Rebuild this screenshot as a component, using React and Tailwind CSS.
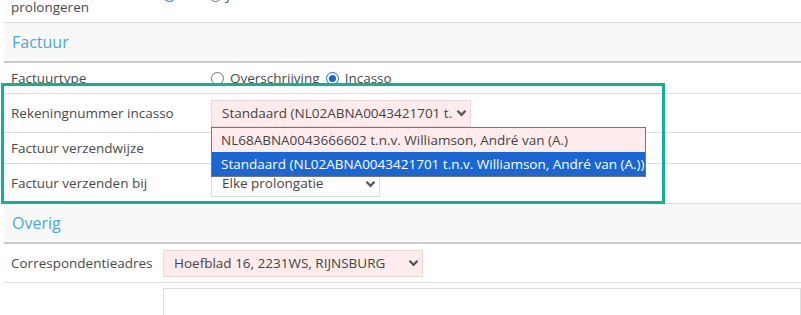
const font = { fontFamily: '"Open Sans", "Liberation Sans", sans-serif' };

function Chevron() {
  return (
    <svg width="11" height="8" viewBox="0 0 11 8" className="shrink-0">
      <path d="M1.5 1.8 L5.5 5.8 L9.5 1.8" fill="none" stroke="#555" strokeWidth="2.3" />
    </svg>
  );
}

function Select({ value, width, pink = true }) {
  return (
    <div
      className={`flex h-[27px] items-center gap-[3px] border pl-[10px] pr-[3px] text-[13.5px] text-[#444] ${
        pink ? "border-[#e8d8d8] bg-[#fdeceb]" : "border-[#dddddd] bg-white"
      }`}
      style={{ width }}
    >
      <span className="flex-1 overflow-hidden whitespace-nowrap">{value}</span>
      <Chevron />
    </div>
  );
}

function Radio({ checked }) {
  return checked ? (
    <span className="inline-flex h-[13px] w-[13px] items-center justify-center rounded-full border border-[#1a66d2] bg-white">
      <span className="h-[7px] w-[7px] rounded-full bg-[#1a66d2]" />
    </span>
  ) : (
    <span className="inline-block h-[13px] w-[13px] rounded-full border border-[#767676] bg-white" />
  );
}

function Header({ title }) {
  return (
    <div className="flex h-[40px] items-center border-b-2 border-[#cccccc] bg-[#f8f8f8] pl-[8px] text-[16px] text-[#4aa8d8]">
      {title}
    </div>
  );
}

function Row({ label, labelWidth, height, children }) {
  return (
    <div className="flex items-center border-b border-[#dedede]" style={{ height }}>
      <div className="shrink-0 pl-[7px] text-[13.5px] text-[#4a4a4a]" style={{ width: labelWidth }}>
        {label}
      </div>
      {children}
    </div>
  );
}

export default function App() {
  return (
    <div className="relative h-[315px] w-[801px] overflow-hidden bg-white" style={font}>
      <div className="ml-[4px]">
        {/* row scrolled partly out of view */}
        <div className="relative h-[23px] overflow-hidden border-b border-[#dedede]">
          <div className="absolute left-[7px] top-[-17px] text-[13.5px] leading-[16px] text-[#4a4a4a]">
            Automatisch
            <br />
            prolongeren
          </div>
          <div className="absolute left-[159px] top-[-15px] flex items-center gap-[4px] text-[13.5px] text-[#4a4a4a]">
            <Radio checked />
            <span>Nee</span>
            <Radio />
            <span>Ja</span>
          </div>
        </div>

        <Header title="Factuur" />

        <Row label="Factuurtype" labelWidth={207} height={31}>
          <div className="flex items-center gap-[6px] text-[13.5px] text-[#4a4a4a]">
            <Radio />
            <span>Overschrijving</span>
            <Radio checked />
            <span>Incasso</span>
          </div>
        </Row>

        <Row label="Rekeningnummer incasso" labelWidth={207} height={39}>
          <Select value="Standaard (NL02ABNA0043421701 t.n.v. Williamson, André van (A.))" width={260} />
        </Row>

        <Row label="Factuur verzendwijze" labelWidth={207} height={31}>
          <Select value="Per e-mail" width={169} pink={false} />
        </Row>

        <Row label="Factuur verzenden bij" labelWidth={207} height={40}>
          <Select value="Elke prolongatie" width={169} pink={false} />
        </Row>

        <Header title="Overig" />

        <Row label="Correspondentieadres" labelWidth={159} height={39}>
          <Select value="Hoefblad 16, 2231WS, RIJNSBURG" width={260} />
        </Row>

        <div className="flex pt-[5px]">
          <div className="w-[159px] shrink-0" />
          <div className="h-[80px] flex-1 border border-[#dedede]" />
        </div>
      </div>

      {/* open dropdown list */}
      <div className="absolute left-[211px] top-[127px] w-[435px] border border-[#767676] bg-white text-[13.5px]">
        <div className="flex h-[24px] items-center whitespace-nowrap bg-[#fdeceb] pl-[9px] text-[#444]">
          NL68ABNA0043666602 t.n.v. Williamson, André van (A.)
        </div>
        <div className="flex h-[24px] items-center whitespace-nowrap bg-[#1a66d2] pl-[9px] text-white">
          Standaard (NL02ABNA0043421701 t.n.v. Williamson, André van (A.))
        </div>
      </div>

      {/* highlight frame */}
      <div className="pointer-events-none absolute left-[1px] top-[83px] h-[121px] w-[664px] border-[3px] border-[#0fb294]" />
    </div>
  );
}
